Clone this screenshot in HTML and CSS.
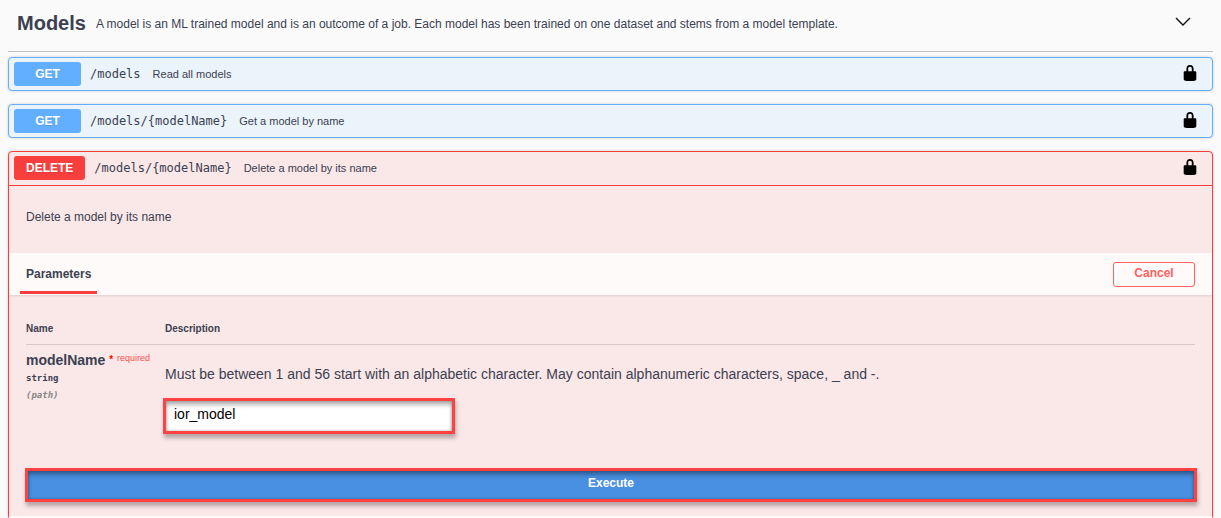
FILE: index.html
```html
<!DOCTYPE html>
<html lang="en">
<head>
<meta charset="utf-8">
<title>Models API</title>
<link rel="stylesheet" href="styles.css">
</head>
<body>
<svg class="defs" aria-hidden="true">
  <symbol id="lock" viewBox="0 0 20 20"><path d="M15.8 8H14V5.6C14 2.703 12.665 1 10 1 7.334 1 6 2.703 6 5.6V8H4c-.553 0-1 .646-1 1.199V17c0 .549.428 1.139.951 1.307l1.197.387C5.672 18.861 6.55 19 7.1 19h5.8c.549 0 1.428-.139 1.951-.307l1.196-.387c.524-.167.953-.757.953-1.306V9.199C17 8.646 16.352 8 15.8 8zM12 8H8V5.199C8 3.754 8.797 3 10 3c1.203 0 2 .754 2 2.199V8z"/></symbol>
</svg>
<main class="api">
  <header class="tag">
    <h2 class="tag-name">Models</h2>
    <p class="tag-text">A model is an ML trained model and is an outcome of a job. Each model has been trained on one dataset and stems from a model template.</p>
    <button class="icon-button" aria-label="Collapse section"><svg class="chevron" viewBox="0 0 16 9"><path d="M1 1l7 7 7-7"/></svg></button>
  </header>

  <div class="operations">
    <section class="op get">
      <div class="summary">
        <span class="method">GET</span>
        <code class="path">/models</code>
        <span class="summary-text">Read all models</span>
        <button class="icon-button" aria-label="Authorize"><svg class="lock"><use href="#lock"/></svg></button>
      </div>
    </section>

    <section class="op get">
      <div class="summary">
        <span class="method">GET</span>
        <code class="path">/models/{modelName}</code>
        <span class="summary-text">Get a model by name</span>
        <button class="icon-button" aria-label="Authorize"><svg class="lock"><use href="#lock"/></svg></button>
      </div>
    </section>

    <section class="op delete">
      <div class="summary">
        <span class="method">DELETE</span>
        <code class="path">/models/{modelName}</code>
        <span class="summary-text">Delete a model by its name</span>
        <button class="icon-button" aria-label="Authorize"><svg class="lock"><use href="#lock"/></svg></button>
      </div>
      <p class="op-text">Delete a model by its name</p>
      <div class="section-bar">
        <h4 class="tab">Parameters</h4>
        <button class="cancel">Cancel</button>
      </div>
      <div class="params">
        <table class="param-table">
          <thead>
            <tr><th class="name-col">Name</th><th>Description</th></tr>
          </thead>
          <tbody>
            <tr>
              <td class="name-col">
                <label class="param-name" for="model-name">modelName <span class="star">*</span> <span class="required">required</span></label>
                <div class="param-type">string</div>
                <div class="param-in">(path)</div>
              </td>
              <td>
                <p class="param-text">Must be between 1 and 56 start with an alphabetic character. May contain alphanumeric characters, space, _ and -.</p>
                <input class="field" id="model-name" type="text" value="ior_model">
              </td>
            </tr>
          </tbody>
        </table>
        <button class="execute">Execute</button>
      </div>
      <div class="responses"></div>
    </section>
  </div>
</main>
</body>
</html>
```
FILE: styles.css
```css
* {
  box-sizing: border-box;
}

body {
  margin: 0;
  overflow: hidden;
  background: #fafafa;
  color: #3b4151;
  font-family: "Liberation Sans", Arial, sans-serif;
  font-size: 12px;
}

h2, h4, p {
  margin: 0;
}

button, input {
  font-family: inherit;
}

.defs {
  display: none;
}

.api {
  padding: 0 8px;
}

.tag {
  display: flex;
  align-items: center;
  height: 52px;
  padding: 0 22px 6px 9px;
  border-bottom: 1px solid #bfc0c3;
}

.tag-name {
  font-size: 20px;
  line-height: 24px;
}

.tag-text {
  flex: 1;
  padding: 2px 10px 0;
}

.icon-button {
  display: flex;
  padding: 0;
  border: 0;
  background: none;
}

.chevron {
  width: 16px;
  height: 9px;
  margin-bottom: 2px;
  fill: none;
  stroke: #111;
  stroke-width: 1.4;
}

.operations {
  display: grid;
  gap: 13px;
  padding-top: 5px;
}

.op {
  border: 1px solid;
  border-radius: 4px;
  box-shadow: 0 0 3px rgba(0, 0, 0, 0.19);
}

.get {
  border-color: #61affe;
  background: #ebf3fb;
}

.delete {
  border-color: #f93e3e;
  background: #fae7e7;
}

.summary {
  display: flex;
  align-items: center;
  height: 32px;
  padding: 0 13px 0 5px;
}

.method {
  min-width: 67px;
  padding: 0 12px;
  border-radius: 3px;
  color: #fff;
  font-weight: 700;
  line-height: 24px;
  text-align: center;
  text-shadow: 0 1px 0 rgba(0, 0, 0, 0.1);
}

.get .method {
  background: #61affe;
}

.delete .method {
  background: #f93e3e;
}

.path {
  padding: 0 12px 0 9px;
  font-family: "DejaVu Sans Mono", monospace;
  font-size: 12px;
}

.summary-text {
  flex: 1;
  font-size: 11px;
}

.lock {
  width: 18px;
  height: 18px;
  margin-bottom: 3px;
}

.delete .summary {
  height: 34px;
  padding-bottom: 1px;
  border-bottom: 1px solid #f93e3e;
}

.op-text {
  padding: 23px 17px 28px;
  line-height: 16px;
}

.section-bar {
  display: flex;
  align-items: center;
  justify-content: space-between;
  height: 42px;
  padding: 0 17px 0 11px;
  background: #fefaf9;
  box-shadow: 0 1px 2px rgba(0, 0, 0, 0.1);
}

.tab {
  align-self: flex-end;
  height: 40px;
  margin-bottom: 1px;
  padding: 0 6px;
  border-bottom: 3px solid #f93e3e;
  font-size: 12px;
  line-height: 40px;
}

.cancel {
  width: 82px;
  height: 25px;
  padding: 0 0 3px;
  border: 1px solid #ff6060;
  border-radius: 3px;
  background: transparent;
  color: #ff6060;
  font-size: 12px;
  font-weight: 700;
}

.params {
  padding: 27px 15px 14px 16px;
}

.param-table {
  width: 100%;
  padding: 0 2px 0 1px;
  border-spacing: 0;
}

.param-table th {
  padding: 0 0 8px;
  border-bottom: 1px solid #d8c8cc;
  font-size: 10px;
  line-height: 14px;
  text-align: left;
}

.param-table td {
  padding: 0;
  vertical-align: top;
}

.param-table .name-col {
  width: 139px;
}

.param-table td.name-col {
  padding-top: 3px;
}

.param-name {
  display: block;
  font-size: 14px;
  font-weight: 700;
  line-height: 20px;
  white-space: nowrap;
}

.star, .required {
  color: #ff0000;
  font-size: 10px;
  vertical-align: 2px;
}

.required {
  color: #ff5050;
  font-size: 9px;
  font-weight: 400;
  vertical-align: 4px;
}

.param-type, .param-in {
  font-family: "DejaVu Sans Mono", monospace;
  font-size: 9px;
  font-weight: 700;
  line-height: 17px;
}

.param-in {
  color: #888;
  font-style: italic;
}

.param-text {
  padding: 19px 0 14px;
  font-size: 14px;
  line-height: 20px;
}

.field {
  display: block;
  width: 292px;
  height: 36px;
  margin-left: -2px;
  padding: 0 8px 4px;
  border: 3px solid #ff4141;
  border-radius: 0;
  background: #fff;
  box-shadow: 1px 4px 4px rgba(60, 40, 40, 0.35), inset 0 4px 4px rgba(0, 0, 0, 0.28), inset 0 0 3px rgba(0, 0, 0, 0.3);
  font-size: 14px;
}

.execute {
  display: block;
  width: 100%;
  height: 34px;
  margin-top: 34px;
  padding: 0 0 4px;
  border: 3px solid #ff4141;
  background: #4990e2;
  box-shadow: 1px 4px 4px rgba(60, 40, 40, 0.35), inset 0 4px 4px rgba(0, 0, 0, 0.3), inset 0 0 3px rgba(0, 0, 0, 0.3);
  color: #fff;
  font-size: 12px;
  font-weight: 700;
}

.responses {
  min-height: 3px;
  background: #fefaf9;
}
```
